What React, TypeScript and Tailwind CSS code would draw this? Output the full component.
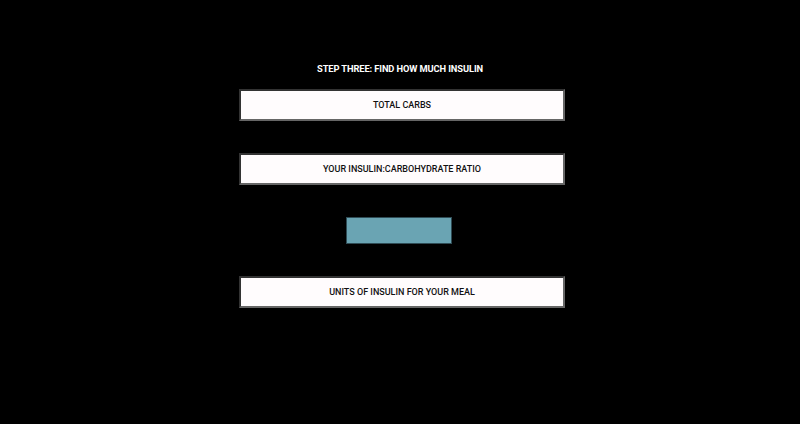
import React from "react";

const inputCls =
  "ml-[4px] w-[326px] h-[32px] bg-[#fffcfd] border-2 border-t-[#333] border-l-[#333] border-b-[#666] border-r-[#666] text-center text-[9px] font-medium text-black placeholder:text-[#111] outline-none";

export default function App() {
  return (
    <div className="w-full h-[424px] bg-black flex flex-col items-center pt-[61px] font-['Roboto',sans-serif]">
      <h1 className="text-white text-[9.3px] font-bold leading-[16px] tracking-[-0.1px]">
        STEP THREE: FIND HOW MUCH INSULIN
      </h1>
      <input className={`${inputCls} mt-[12px]`} placeholder="TOTAL CARBS" />
      <input className={`${inputCls} mt-[32px]`} placeholder="YOUR INSULIN:CARBOHYDRATE RATIO" />
      <button className="mt-[32px] -ml-[2px] w-[106px] h-[27px] bg-[#6aa4b3] border border-[#2f4c55]"></button>
      <input className={`${inputCls} mt-[32px]`} placeholder="UNITS OF INSULIN FOR YOUR MEAL" />
    </div>
  );
}
